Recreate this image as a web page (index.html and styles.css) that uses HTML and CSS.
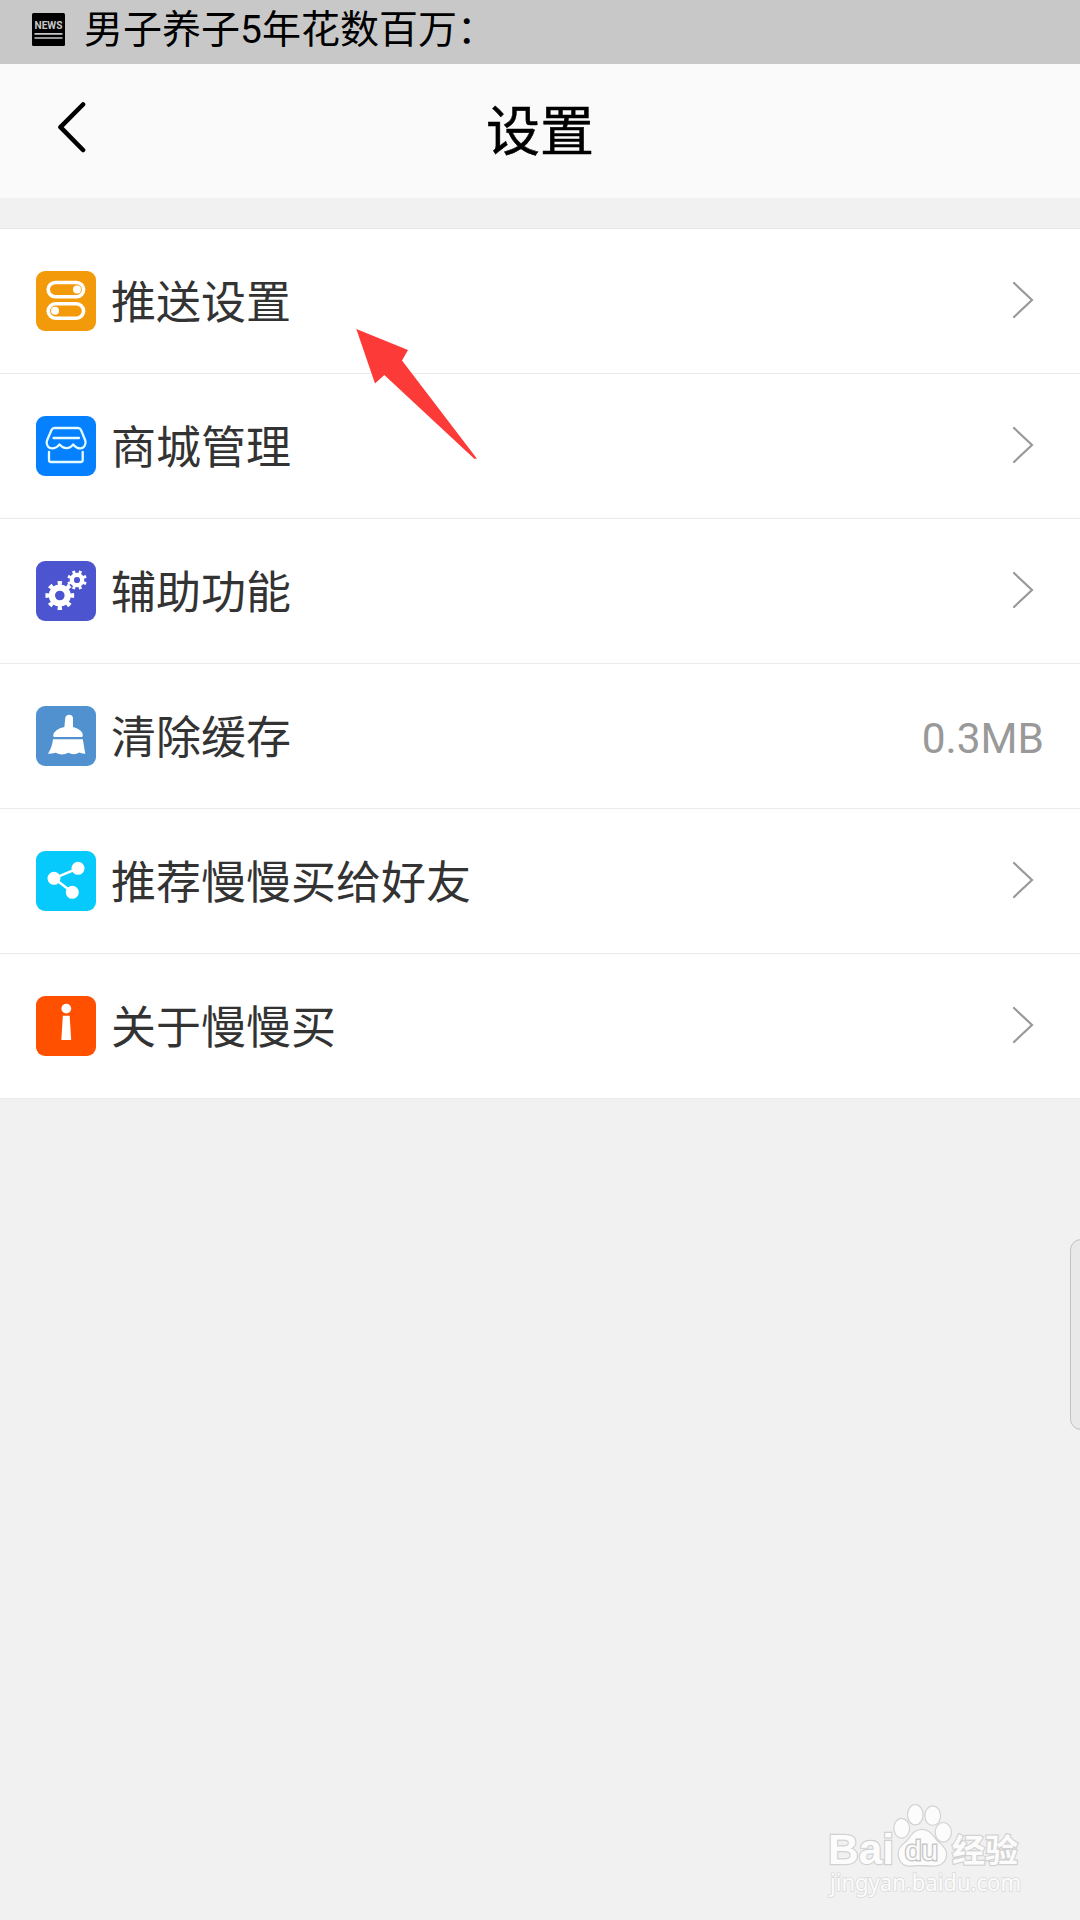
FILE: index.html
```
<!DOCTYPE html>
<html lang="zh-CN">
<head>
  <meta charset="UTF-8" />
  <title>设置</title>
  <link rel="stylesheet" href="styles.css">
</head>
<body>
  <div class="status-bar">
    <svg class="news-icon" viewBox="0 0 33 33">
      <rect width="33" height="33" rx="1.5" fill="#000" />
      <text x="2.5" y="16.3" textLength="28" lengthAdjust="spacingAndGlyphs">NEWS</text>
      <path d="M2.5 20.8h28M2.5 25h28" stroke="#c8c8c8" stroke-width="1.7" />
    </svg>
    <span>男子养子5年花数百万：</span>
  </div>

  <header class="header">
    <svg class="back" viewBox="0 0 30 52">
      <path d="M26 3.5L3.5 26.2L26 49" />
    </svg>
    <h1>设置</h1>
  </header>

  <main>
    <ul class="list">
      <li>
        <svg class="icon orange" viewBox="0 0 60 60">
          <g fill="none" stroke="#fff" stroke-width="3.6">
            <rect x="12.2" y="11.5" width="35.4" height="14.2" rx="7.1" />
            <rect x="12.2" y="32.8" width="35.4" height="14.4" rx="7.2" />
          </g>
          <circle cx="41" cy="18.6" r="4" fill="#fff" />
          <circle cx="19" cy="39.8" r="4" fill="#fff" />
        </svg>
        <span class="label">推送设置</span>
        <svg class="chevron" viewBox="0 0 22 38"><path d="M2 2L20 19L2 36" /></svg>
      </li>
      <li>
        <svg class="icon blue" viewBox="0 0 60 60">
          <g fill="none" stroke="#e4fbff" stroke-width="2.3" stroke-linecap="round" stroke-linejoin="round">
            <path d="M18.5 12H42Q44 12 45 14L49.3 24.5C50.5 28 48 32.4 44.5 32.4Q40.5 32.4 37.2 28.4Q34.5 32.2 30.3 32.2Q26.5 32.2 23.5 28.4Q20.5 32.4 16 32.4C12 32.4 9.7 28 11 24.5L15.5 14Q16.5 12 18.5 12Z" />
            <path d="M17.5 22H43M13 35.8V44Q13 46 15 46H44.7Q46.7 46 46.7 44V35.8" />
          </g>
        </svg>
        <span class="label">商城管理</span>
        <svg class="chevron" viewBox="0 0 22 38"><path d="M2 2L20 19L2 36" /></svg>
      </li>
      <li>
        <svg class="icon indigo" viewBox="0 0 60 60">
          <g fill="none" stroke="#fff">
            <circle cx="23.8" cy="34.5" r="7.9" stroke-width="6.2" />
            <circle cx="23.8" cy="34.5" r="12" stroke-width="4.8" pathLength="160" stroke-dasharray="9 11" stroke-dashoffset="4.5" />
            <circle cx="41" cy="19" r="5.2" stroke-width="4.2" />
            <circle cx="41" cy="19" r="8" stroke-width="3.6" pathLength="160" stroke-dasharray="9 11" stroke-dashoffset="-5.5" />
          </g>
        </svg>
        <span class="label">辅助功能</span>
        <svg class="chevron" viewBox="0 0 22 38"><path d="M2 2L20 19L2 36" /></svg>
      </li>
      <li>
        <svg class="icon steel" viewBox="0 0 60 60">
          <path d="M29.2 12.3Q29.6 8.7 33.2 8.7Q36.8 8.7 37 12.3V21Q46.8 23.5 46.8 29.5Q46.8 31 45.5 31H18.5Q17.2 31 17.2 29.5Q18.2 23 28.4 21ZM17 33.2H46.8L49.3 47.8Q46.5 47.8 43.4 46.6Q38 49.8 32.3 46.8Q26 50.2 19.8 46.8Q16.5 47.8 12 47.8Q16.2 41 17 33.2Z" fill="#fff" />
        </svg>
        <span class="label">清除缓存</span>
        <span class="value">0.3MB</span>
      </li>
      <li>
        <svg class="icon cyan" viewBox="0 0 60 60">
          <path d="M42 17.3L18 27.3L36.3 41.3" fill="none" stroke="#fff" stroke-width="2.5" />
          <g fill="#fff">
            <circle cx="18" cy="27.3" r="6.5" />
            <circle cx="42" cy="17.3" r="6.5" />
            <circle cx="36.3" cy="41.3" r="6.5" />
          </g>
        </svg>
        <span class="label">推荐慢慢买给好友</span>
        <svg class="chevron" viewBox="0 0 22 38"><path d="M2 2L20 19L2 36" /></svg>
      </li>
      <li>
        <svg class="icon red" viewBox="0 0 60 60">
          <circle cx="30.3" cy="12.6" r="4.9" fill="#fff" />
          <path d="M26.8 19.7H33.7L35.2 44H25.3Z" fill="#fff" />
        </svg>
        <span class="label">关于慢慢买</span>
        <svg class="chevron" viewBox="0 0 22 38"><path d="M2 2L20 19L2 36" /></svg>
      </li>
    </ul>
  </main>

  <svg class="pointer" viewBox="0 0 124 132">
    <path d="M.3 0L52 21L46 31.5L121 129.8H118.3L28.3 46L19 54.5Z" fill="#fc3a38" />
  </svg>

  <div class="side-handle"></div>

  <svg class="watermark" viewBox="0 0 280 140">
    <g class="mark">
      <text class="bai" x="28" y="83.5" textLength="66" lengthAdjust="spacingAndGlyphs">Bai</text>
      <ellipse cx="101.7" cy="48.3" rx="7.3" ry="9.3" />
      <ellipse cx="115.3" cy="34.7" rx="7.2" ry="9.6" />
      <ellipse cx="132.7" cy="35.7" rx="7.3" ry="9.2" />
      <ellipse cx="143.3" cy="52.3" rx="7.5" ry="9.2" />
      <path d="M122 50C129 50 132.5 55.5 135.5 59.5C139 64 146 67.5 146 74C146 82 140 86 133 85.5C126 85 117 84.5 111 85.5C103 86.5 98.5 80 98.7 73C99 66.5 105.5 63.5 109 59C112.5 54.5 115 50 122 50Z" />
      <text class="du" x="105" y="80" textLength="33" lengthAdjust="spacingAndGlyphs">du</text>
      <text class="jy" x="152" y="81.5" textLength="66" lengthAdjust="spacingAndGlyphs">经验</text>
      <text class="url" x="30" y="110.5" textLength="191" lengthAdjust="spacingAndGlyphs">jingyan.baidu.com</text>
    </g>
  </svg>
</body>
</html>
```
FILE: styles.css
```
body {
  margin: 0;
  height: 1920px;
  background: #f1f1f1;
  color: #333;
  font-family: Roboto, "Noto Sans CJK SC", sans-serif;
  position: relative;
  overflow: hidden;
}

.status-bar {
  display: flex;
  align-items: center;
  height: 64px;
  box-sizing: border-box;
  padding: 0 32px 5px;
  gap: 19px;
  background: #c8c8c8;
  color: #000;
  font-size: 39px;
  line-height: 58px;
}
.status-bar span {
  padding-top: 1px;
}
.news-icon {
  width: 33px;
  height: 33px;
}
.news-icon text {
  font: bold 10.8px Roboto, sans-serif;
  fill: #c8c8c8;
}

.header {
  display: grid;
  grid-template-columns: 1fr auto 1fr;
  align-items: center;
  height: 134px;
  background: #fafafa;
  color: #000;
}
.header h1 {
  margin: 0;
  padding-top: 4px;
  font-size: 54px;
  font-weight: 400;
  line-height: 130px;
  -webkit-text-stroke: 0.5px #000;
}
.back {
  width: 30px;
  height: 52px;
  margin: 0 0 8px 57px;
}
.back path {
  fill: none;
  stroke: #000;
  stroke-width: 4.6;
  stroke-linecap: round;
  stroke-linejoin: round;
}

.list {
  list-style: none;
  margin: 30px 0 0;
  padding: 0;
  border-top: 1px solid #e6e6e6;
  background: #fff;
}
.list li {
  display: flex;
  align-items: center;
  height: 144px;
  padding: 0 36px;
  border-bottom: 1px solid #ebebeb;
}
.icon {
  width: 60px;
  height: 60px;
  border-radius: 9px;
}
.orange { background: #f39a0a; }
.blue { background: #0580ff; }
.indigo { background: #4c54d0; }
.steel { background: #5191cf; }
.cyan { background: #06c9fc; }
.red { background: #ff5000; }

.label {
  flex: 1;
  margin-left: 15px;
  padding-top: 6px;
  font-size: 45px;
  line-height: 138px;
}
.value {
  padding-top: 4px;
  font-size: 42.4px;
  color: #999;
}
.chevron {
  width: 22px;
  height: 38px;
  margin: 0 10px 2px 0;
}
.chevron path {
  fill: none;
  stroke: #999;
  stroke-width: 2.2;
  stroke-linecap: round;
}

/* red arrow over the first rows */
.pointer {
  position: absolute;
  left: 356px;
  top: 329px;
  width: 124px;
  height: 132px;
}

.side-handle {
  position: absolute;
  right: -12px;
  top: 1239px;
  width: 20px;
  height: 189px;
  border: 1px solid #c2c2c2;
  border-radius: 12px;
  background: #e9e9e9;
}

.watermark {
  position: absolute;
  right: 0;
  bottom: 0;
  width: 280px;
  height: 140px;
}
.mark {
  fill: #fcfcfc;
  stroke: #d2d2d2;
  stroke-width: 2.4;
  paint-order: stroke;
}
.bai {
  font: bold 42px "Liberation Sans", sans-serif;
}
.du {
  font: 28px "Liberation Sans", sans-serif;
  stroke: #c8c8c8;
  stroke-width: 2.8;
}
.jy {
  font: bold 32px "Noto Sans CJK SC", sans-serif;
}
.url {
  font: 23px "Noto Sans", sans-serif;
  stroke-width: 1.6;
  stroke: #dadada;
}
```
